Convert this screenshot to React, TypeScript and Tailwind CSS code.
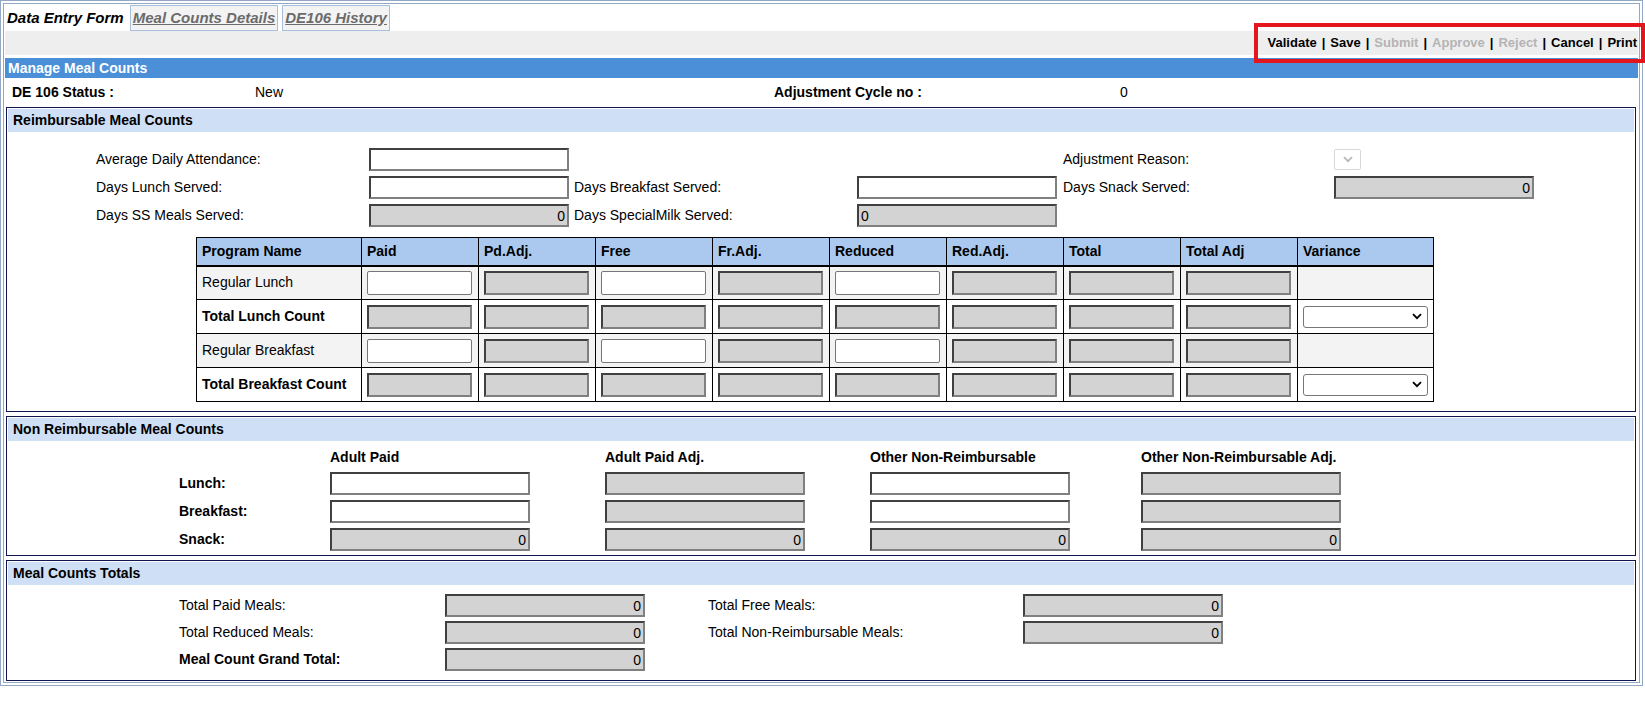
import React from 'react';

const FONT = "font-['Liberation_Sans',Arial,sans-serif]";

// 2px inset box, used for most text fields on this page
const Box = ({ grey, value, left, w = 'w-[200px]' }: { grey?: boolean; value?: string; left?: boolean; w?: string }) => (
  <div
    className={`${w} h-[23px] border-2 border-t-[#404040] border-l-[#404040] border-b-[#808080] border-r-[#808080] ${
      grey ? 'bg-[#d3d3d3]' : 'bg-white'
    } flex items-center ${left ? 'justify-start pl-[2px]' : 'justify-end pr-[2px]'} text-[14px] leading-none`}
  >
    {value}
  </div>
);

// plain chrome-style input used inside the grid
const CellInput = () => <div className="w-[105px] h-[24px] bg-white border border-[#767676] rounded-[2px]" />;
const CellGrey = () => (
  <div className="w-[105px] h-[24px] bg-[#d3d3d3] border-2 border-t-[#404040] border-l-[#404040] border-b-[#808080] border-r-[#808080]" />
);

const Chevron = ({ color = '#000' }: { color?: string }) => (
  <svg width="10" height="7" viewBox="0 0 10 7">
    <path d="M1 1.2 L5 5.2 L9 1.2" fill="none" stroke={color} strokeWidth="1.8" />
  </svg>
);

const VarianceSelect = () => (
  <div className="w-[125px] h-[22px] bg-white border border-[#767676] rounded-[3px] flex items-center justify-end pr-[5px]">
    <Chevron />
  </div>
);

const SectionHeader = ({ title }: { title: string }) => (
  <div className="h-[23px] bg-[#cfdff5] flex items-center pl-[5px] font-bold text-[14px]">{title}</div>
);

const cols = ['Paid', 'Pd.Adj.', 'Free', 'Fr.Adj.', 'Reduced', 'Red.Adj.', 'Total', 'Total Adj'];

type Row = { name: string; total: boolean };
const rows: Row[] = [
  { name: 'Regular Lunch', total: false },
  { name: 'Total Lunch Count', total: true },
  { name: 'Regular Breakfast', total: false },
  { name: 'Total Breakfast Count', total: true },
];

export default function App() {
  return (
    <div className={`${FONT} w-[1645px] h-[701px] bg-white text-black text-[14px] relative overflow-hidden`}>
      <div className="w-[1643px] border-[4px] [border-style:double] border-[#93a8c6] pl-px pr-px pb-[1px]">
        {/* tabs */}
        <div className="flex items-end h-[27px] pt-[1px] gap-[4px]">
          <div className="h-[26px] px-[2px] flex items-center font-bold italic text-[15px] bg-white">Data Entry Form</div>
          <div className="h-[26px] px-[2px] flex items-center font-bold italic underline text-[15px] text-[#6b6b6b] bg-[#f3f3f3] border border-[#a6bfdc]">
            Meal Counts Details
          </div>
          <div className="h-[26px] px-[2px] flex items-center font-bold italic underline text-[15px] text-[#6b6b6b] bg-[#f3f3f3] border border-[#a6bfdc]">
            DE106 History
          </div>
        </div>

        {/* toolbar band */}
        <div className="h-[24px] bg-[#eeeeee] flex items-center justify-end pr-[1px] text-[13px] font-bold">
          <span>Validate</span>
          <span className="px-[5px]">|</span>
          <span>Save</span>
          <span className="px-[5px]">|</span>
          <span className="text-[#b4b4b4]">Submit</span>
          <span className="px-[5px]">|</span>
          <span className="text-[#b4b4b4]">Approve</span>
          <span className="px-[5px]">|</span>
          <span className="text-[#b4b4b4]">Reject</span>
          <span className="px-[5px]">|</span>
          <span>Cancel</span>
          <span className="px-[5px]">|</span>
          <span>Print</span>
        </div>

        <div className="h-[20px] mt-[3px] bg-[#4a8fd8] text-white font-bold flex items-center pl-[3px] text-[14px]">
          Manage Meal Counts
        </div>

        {/* status row */}
        <div className="h-[29px] grid grid-cols-[243px_519px_346px_1fr] items-center pl-[7px]">
          <span className="font-bold">DE 106 Status :</span>
          <span>New</span>
          <span className="font-bold">Adjustment Cycle no :</span>
          <span>0</span>
        </div>

        <div className="pl-px pr-[2px] flex flex-col gap-[4px]">
          {/* Reimbursable */}
          <section className="border border-[#0f1650] p-px h-[305px]">
            <SectionHeader title="Reimbursable Meal Counts" />
            <div className="pl-[88px] pt-[16px] flex flex-col gap-[5px]">
              <div className="grid grid-cols-[273px_205px_283px_206px_271px_200px] items-center">
                <span>Average Daily Attendance:</span>
                <Box />
                <span />
                <span />
                <span>Adjustment Reason:</span>
                <div className="w-[27px] h-[21px] border border-[#d8d8d8] rounded-[2px] bg-white flex items-center justify-center">
                  <Chevron color="#b8b8b8" />
                </div>
              </div>
              <div className="grid grid-cols-[273px_205px_283px_206px_271px_200px] items-center">
                <span>Days Lunch Served:</span>
                <Box />
                <span>Days Breakfast Served:</span>
                <Box />
                <span>Days Snack Served:</span>
                <Box grey value="0" />
              </div>
              <div className="grid grid-cols-[273px_205px_283px_206px_271px_200px] items-center">
                <span>Days SS Meals Served:</span>
                <Box grey value="0" />
                <span>Days SpecialMilk Served:</span>
                <Box grey value="0" left />
                <span />
                <span />
              </div>
            </div>

            <table className="ml-[188px] mt-[10px] border-collapse border border-black">
              <thead>
                <tr className="h-[28px] bg-[#abc9ee] border-b-2 border-black">
                  <th className="w-[165px] border border-black text-left pl-[5px] font-bold">Program Name</th>
                  {cols.map((c) => (
                    <th key={c} className="w-[117px] border border-black text-left pl-[5px] font-bold">
                      {c}
                    </th>
                  ))}
                  <th className="w-[136px] border border-black text-left pl-[5px] font-bold">Variance</th>
                </tr>
              </thead>
              <tbody>
                {rows.map((r) => (
                  <tr key={r.name} className={`h-[34px] ${r.total ? 'bg-white' : 'bg-[#f3f3f3]'}`}>
                    <td className={`border border-black pl-[5px] ${r.total ? 'font-bold' : ''}`}>{r.name}</td>
                    {cols.map((c, i) => (
                      <td key={c} className="border border-black pl-[5px]">
                        {!r.total && (i === 0 || i === 2 || i === 4) ? <CellInput /> : <CellGrey />}
                      </td>
                    ))}
                    <td className="border border-black pl-[5px]">{r.total && <VarianceSelect />}</td>
                  </tr>
                ))}
              </tbody>
            </table>
          </section>

          {/* Non reimbursable */}
          <section className="border border-[#0f1650] p-px h-[140px]">
            <SectionHeader title="Non Reimbursable Meal Counts" />
            <div className="pl-[171px] pt-[6px] flex flex-col gap-[5px]">
              <div className="grid grid-cols-[151px_275px_265px_271px_200px] font-bold h-[20px] items-center">
                <span />
                <span>Adult Paid</span>
                <span>Adult Paid Adj.</span>
                <span>Other Non-Reimbursable</span>
                <span>Other Non-Reimbursable Adj.</span>
              </div>
              {['Lunch:', 'Breakfast:', 'Snack:'].map((l) => (
                <div key={l} className="grid grid-cols-[151px_275px_265px_271px_200px] items-center">
                  <span className="font-bold">{l}</span>
                  <Box grey={l === 'Snack:'} value={l === 'Snack:' ? '0' : undefined} />
                  <Box grey value={l === 'Snack:' ? '0' : undefined} />
                  <Box grey={l === 'Snack:'} value={l === 'Snack:' ? '0' : undefined} />
                  <Box grey value={l === 'Snack:' ? '0' : undefined} />
                </div>
              ))}
            </div>
          </section>

          {/* Totals */}
          <section className="border border-[#0f1650] p-px h-[121px]">
            <SectionHeader title="Meal Counts Totals" />
            <div className="pl-[171px] pt-[9px] flex flex-col gap-[4px]">
              <div className="grid grid-cols-[266px_263px_315px_200px] items-center">
                <span>Total Paid Meals:</span>
                <Box grey value="0" />
                <span>Total Free Meals:</span>
                <Box grey value="0" />
              </div>
              <div className="grid grid-cols-[266px_263px_315px_200px] items-center">
                <span>Total Reduced Meals:</span>
                <Box grey value="0" />
                <span>Total Non-Reimbursable Meals:</span>
                <Box grey value="0" />
              </div>
              <div className="grid grid-cols-[266px_263px_315px_200px] items-center">
                <span className="font-bold">Meal Count Grand Total:</span>
                <Box grey value="0" />
                <span />
                <span />
              </div>
            </div>
          </section>
        </div>
      </div>

      {/* red annotation around the action links */}
      <div className="absolute left-[1254px] top-[23px] w-[391px] h-[40px] border-[4px] border-[#e3161d] pointer-events-none" />
    </div>
  );
}
